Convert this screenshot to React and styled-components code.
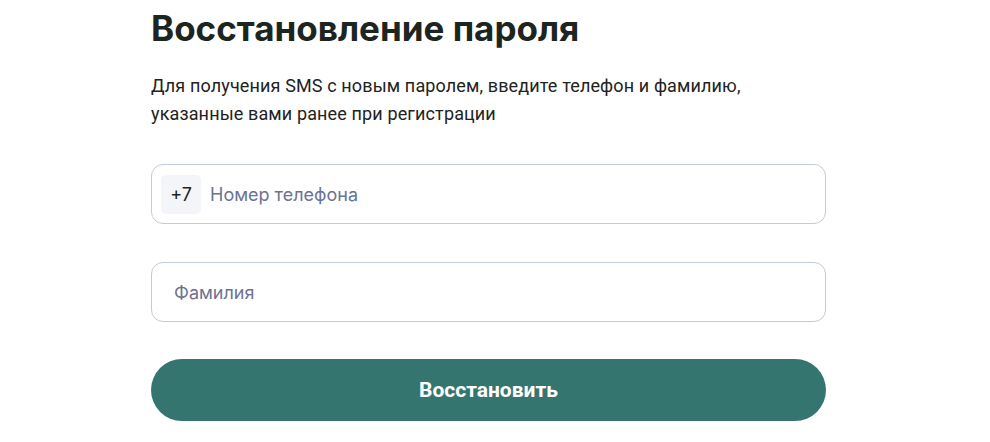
import styled, { createGlobalStyle } from "styled-components"

const GlobalStyle = createGlobalStyle`
  body {
    margin: 0;
    background: #ffffff;
    font-family: Roboto, "Liberation Sans", sans-serif;
  }
`

const Page = styled.div`
  width: 675px;
  padding: 6px 0 0 151px;
`

const Title = styled.h1`
  margin: 0;
  font-family: Inter, "Noto Sans", sans-serif;
  font-weight: 700;
  font-size: 35px;
  line-height: 44px;
  color: #1d2521;
`

const Lead = styled.p`
  margin: 22px 0 0;
  font-size: 18px;
  line-height: 28px;
  letter-spacing: 0.13px;
  color: #222222;
`

const Form = styled.form`
  display: flex;
  flex-direction: column;
  gap: 38px;
  margin-top: 36px;
`

const Field = styled.label`
  display: flex;
  align-items: center;
  gap: 9px;
  height: 60px;
  box-sizing: border-box;
  padding: 0 ${p => (p.$prefixed ? "9px" : "22px")};
  border: 1px solid #c3cad8;
  border-radius: 12px;
  background: #fff;
`

const Prefix = styled.span`
  display: flex;
  align-items: center;
  justify-content: center;
  width: 40px;
  height: 39px;
  border-radius: 5px;
  background: #f4f5f8;
  font-family: Inter, sans-serif;
  font-size: 18px;
  color: #1d2521;
`

const Input = styled.input`
  flex: 1;
  border: none;
  outline: none;
  padding: 0;
  background: transparent;
  font-family: Inter, sans-serif;
  font-size: 18px;
  color: #1d2521;
  &::placeholder {
    color: #6c7392;
  }
`

const Submit = styled.button`
  height: 62px;
  margin-top: -1px;
  border: none;
  border-radius: 31px;
  background: #357570;
  color: #ffffff;
  font-family: Roboto, sans-serif;
  font-weight: 700;
  font-size: 21px;
  cursor: pointer;
`

export default function App() {
  return (
    <>
      <GlobalStyle />
      <Page>
        <Title>Восстановление пароля</Title>
        <Lead>
          Для получения SMS с новым паролем, введите телефон и фамилию,
          <br />
          указанные вами ранее при регистрации
        </Lead>
        <Form onSubmit={e => e.preventDefault()}>
          <Field $prefixed>
            <Prefix>+7</Prefix>
            <Input placeholder="Номер телефона" />
          </Field>
          <Field>
            <Input placeholder="Фамилия" />
          </Field>
          <Submit type="submit">Восстановить</Submit>
        </Form>
      </Page>
    </>
  )
}
